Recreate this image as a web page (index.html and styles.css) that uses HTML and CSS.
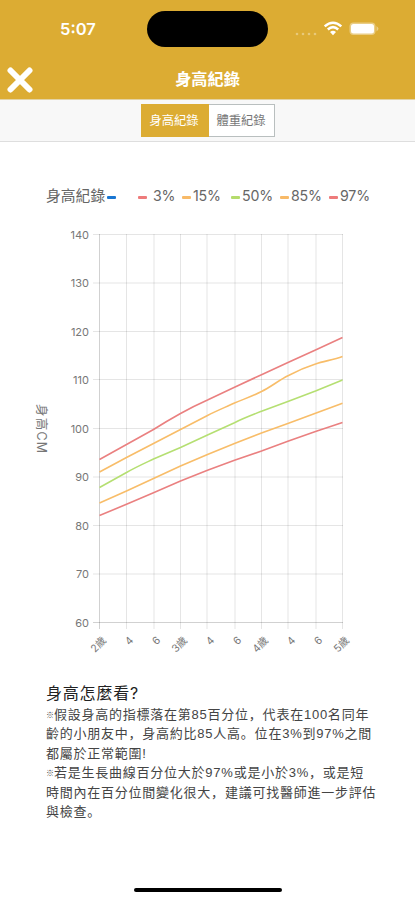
FILE: index.html
```html
<!DOCTYPE html>
<html lang="zh-Hant">
<head>
    <meta charset="UTF-8">
    <meta name="viewport" content="width=device-width, initial-scale=1.0">
    <title>身高紀錄</title>
    <link rel="stylesheet" href="styles.css">
</head>
<body>
    <header class="header">
        <div class="status-bar">
            <span class="time">5:07</span>
            <div class="island"></div>
            <div class="status-icons">
                <svg class="signal" width="22" height="4" viewBox="0 0 22 4">
                    <circle cx="2" cy="2" r="1.3"/><circle cx="8" cy="2" r="1.3"/><circle cx="14" cy="2" r="1.3"/><circle cx="20" cy="2" r="1.3"/>
                </svg>
                <svg class="wifi" width="20" height="15" viewBox="0 0 20 15">
                    <path d="M1.7 5.4Q10-2 18.3 5.4M4.8 8.5Q10 3.8 15.2 8.5"/>
                    <path class="wifi-dot" d="M7 11Q10 8.6 13 11L10 14.2Z"/>
                </svg>
                <svg class="battery" width="30" height="14" viewBox="0 0 30 14">
                    <rect class="battery-case" x="0.5" y="0.5" width="26" height="12.5" rx="4"/>
                    <rect x="2" y="2" width="23" height="9.5" rx="2.5"/>
                    <path class="battery-tip" d="M27.5 4Q31.5 6.8 27.5 9.5Z"/>
                </svg>
            </div>
        </div>
        <div class="nav">
            <svg class="close" width="26" height="26" viewBox="0 0 26 26">
                <path d="M3.5 3.5L22.5 22.5M22.5 3.5L3.5 22.5"/>
            </svg>
            <h1>身高紀錄</h1>
        </div>
    </header>

    <nav class="tabs">
        <div class="tab active">身高紀錄</div>
        <div class="tab">體重紀錄</div>
    </nav>

    <main>
        <!-- 圖例 -->
        <div class="legend">
            <span class="legend-title">身高紀錄</span><i class="mark blue"></i>
            <div class="item first"><i class="mark red"></i>3%</div>
            <div class="item"><i class="mark orange"></i>15%</div>
            <div class="item"><i class="mark green"></i>50%</div>
            <div class="item"><i class="mark orange"></i>85%</div>
            <div class="item"><i class="mark red"></i>97%</div>
        </div>

        <!-- 生長曲線 -->
        <svg class="chart" width="415" height="450" viewBox="0 220 415 450">
            <path class="grid" d="M93 234.5H343M93 283H343M93 331.5H343M93 379.5H343M93 428.5H343M93 477H343M93 525.5H343M93 574H343M126.5 234V629M154 234V629M180.5 234V629M207 234V629M235 234V629M261.5 234V629M288 234V629M316 234V629M342.5 234V629"/>
            <path class="axis" d="M99.5 234V629M93 622.5H343"/>

            <g class="y-labels">
                <text x="89" y="238.5">140</text>
                <text x="89" y="287">130</text>
                <text x="89" y="335.5">120</text>
                <text x="89" y="384">110</text>
                <text x="89" y="432.5">100</text>
                <text x="89" y="481">90</text>
                <text x="89" y="529.5">80</text>
                <text x="89" y="578">70</text>
                <text x="89" y="626.5">60</text>
            </g>

            <g class="x-labels">
                <text transform="translate(107 641) rotate(-45)">2歲</text>
                <text transform="translate(134 641) rotate(-45)">4</text>
                <text transform="translate(161 641) rotate(-45)">6</text>
                <text transform="translate(188 641) rotate(-45)">3歲</text>
                <text transform="translate(215 641) rotate(-45)">4</text>
                <text transform="translate(242 641) rotate(-45)">6</text>
                <text transform="translate(269 641) rotate(-45)">4歲</text>
                <text transform="translate(296 641) rotate(-45)">4</text>
                <text transform="translate(323 641) rotate(-45)">6</text>
                <text transform="translate(350 641) rotate(-45)">5歲</text>
            </g>

            <text class="y-title" transform="translate(37 404) rotate(90)" textLength="49">身高CM</text>

            <path class="line red" d="M99.5 459.5L126.5 444.5L153.5 429.5Q167 421 180.5 413.5T207.5 400L234.5 387.2L261.5 374.7L288.5 362.3L315.5 350L342.5 337.5"/>
            <path class="line orange" d="M99.5 472L126.5 457.5L153.5 443.5L180.5 429.5L207.5 415.5C216 411 226 407 234.5 403C244 399 253 396 261.5 391.5C271 387 279 380 288.5 375.5C297 371 306 367 315.5 364C324 361 333 360 342.5 356.5"/>
            <path class="line green" d="M99.5 487.5L126.5 472.5C135 467.5 144 463.5 153.5 459L180.5 447.5L207.5 435L234.5 422.7C243 418.5 252 415 261.5 411.3L288.5 401.3L315.5 391L342.5 380"/>
            <path class="line orange" d="M99.5 503L126.5 491L153.5 478.5L180.5 466L207.5 454.5L234.5 443.5L261.5 433L288.5 423.3L315.5 413.3L342.5 403.3"/>
            <path class="line red" d="M99.5 515.5L126.5 504.3L153.5 492.7L180.5 481L207.5 470.3L234.5 460.3L261.5 451L288.5 441L315.5 431.5L342.5 422.5"/>
        </svg>

        <section class="info" lang="zh-Hans">
            <h2>身高怎麼看?</h2>
            <p><span class="star">※</span>假設身高的指標落在第85百分位，代表在100名同年<br>齡的小朋友中，身高約比85人高。位在3%到97%之間<br>都屬於正常範圍!</p>
            <p><span class="star">※</span>若是生長曲線百分位大於97%或是小於3%，或是短<br>時間內在百分位間變化很大，建議可找醫師進一步評估<br>與檢查。</p>
        </section>
    </main>

    <div class="home-bar"></div>
</body>
</html>
```

FILE: styles.css
```css
* {
    box-sizing: border-box;
}
body {
    margin: 0;
    height: 900px;
    display: flex;
    flex-direction: column;
    background: #fff;
    color: #444;
    font-family: Inter, "Noto Sans CJK SC", sans-serif;
    overflow: hidden;
}
.header {
    height: 100px;
    background: #dcac33;
    border-bottom: 1px solid #e3d3a5;
    color: #fff;
}
.status-bar {
    height: 58px;
    display: grid;
    grid-template-columns: 147px 121px 1fr;
    align-items: center;
}
.time {
    padding-left: 60px;
    font-size: 16.5px;
    font-weight: 600;
    line-height: 20px;
}
.island {
    height: 36px;
    border-radius: 18px;
    background: #000;
}
.status-icons {
    display: flex;
    align-items: center;
    padding-left: 27px;
    fill: #fff;
}
.signal {
    margin-top: 9px;
    opacity: 0.35;
}
.wifi {
    margin-left: 6px;
    margin-top: -2px;
    fill: none;
    stroke: #fff;
    stroke-width: 2.5;
}
.wifi-dot {
    fill: #fff;
    stroke: none;
}
.battery {
    margin-left: 6px;
}
.battery-case, .battery-tip {
    opacity: 0.4;
}
.nav {
    height: 41px;
    display: grid;
    grid-template-columns: 40px 1fr 40px;
    align-items: center;
}
.close {
    margin: 3px 0 0 7px;
    fill: none;
    stroke: #fff;
    stroke-width: 6;
    stroke-linecap: round;
}
h1 {
    margin: 0;
    text-align: center;
    font-size: 16.2px;
    font-weight: 700;
    line-height: 20px;
}
.tabs {
    height: 42px;
    display: flex;
    justify-content: center;
    align-items: center;
    background: #f8f8f8;
    border-bottom: 1px solid #dedede;
}
.tab {
    width: 66px;
    height: 33px;
    border: 1px solid #b9bfbf;
    border-left: 0;
    background: #fff;
    color: #777;
    font-size: 12.3px;
    line-height: 31px;
    text-align: center;
}
.tab.active {
    width: 68px;
    background: #dcac33;
    border-color: #dcac33;
    color: #fff;
}
.legend {
    height: 20px;
    margin: 44px 0 0 46px;
    display: flex;
    align-items: center;
    font-size: 14.2px;
    line-height: 20px;
    color: #666;
}
.legend-title {
    width: 61px;
    font-size: 14.8px;
}
.item {
    width: 49px;
    display: flex;
    align-items: center;
    letter-spacing: -0.2px;
}
.item.first {
    width: 44px;
}
.mark {
    width: 9px;
    height: 3px;
    margin: 3px 2px 0 0;
    border-radius: 1px;
}
.item.first .mark {
    margin-right: 6px;
}
.mark.blue {
    margin: 3px 22px 0 0;
    background: #1976d2;
}
.mark.red {
    background: #ee7b7b;
}
.mark.orange {
    background: #f8ba68;
}
.mark.green {
    background: #b5dc6c;
}
.chart {
    display: block;
    margin-top: 14px;
}
.grid, .axis {
    fill: none;
    stroke: #000;
    stroke-opacity: 0.1;
}
.axis {
    stroke-opacity: 0.18;
}
.y-labels {
    fill: #777;
    font-size: 11px;
    text-anchor: end;
}
.x-labels {
    fill: #777;
    font-size: 10.5px;
    text-anchor: end;
}
.y-title {
    fill: #777;
    font-size: 12.5px;
}
.line {
    fill: none;
    stroke-width: 1.6;
}
.line.red {
    stroke: #ea8080;
}
.line.orange {
    stroke: #f8bd69;
}
.line.green {
    stroke: #b5df72;
}
.info {
    margin: 12px 0 0 46px;
    white-space: nowrap;
}
h2 {
    margin: 0;
    font-size: 16px;
    font-weight: 400;
    line-height: 23px;
    letter-spacing: 0.8px;
    color: #222;
}
p {
    margin: 0;
    font-family: "Liberation Sans", "Noto Sans CJK SC", sans-serif;
    font-size: 13px;
    line-height: 19.4px;
    letter-spacing: 0.76px;
}
.star {
    display: inline-block;
    width: 8px;
    font-size: 8px;
    font-weight: 700;
    line-height: 1;
    vertical-align: 1px;
    letter-spacing: 0;
}
.home-bar {
    width: 148px;
    height: 4px;
    margin: auto auto 8px 134px;
    border-radius: 2px;
    background: #000;
}
```
